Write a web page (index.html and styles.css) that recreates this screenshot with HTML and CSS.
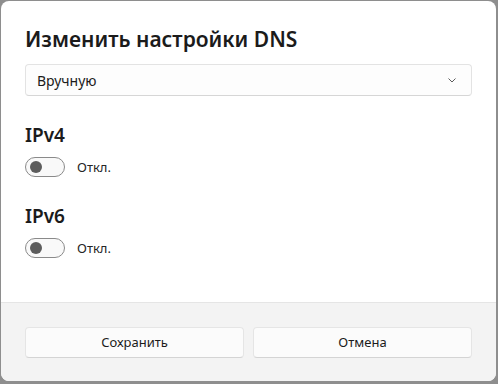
FILE: index.html
```html
<!DOCTYPE html>
<html lang="ru">
<head>
<meta charset="UTF-8">
<title>Изменить настройки DNS</title>
<link rel="stylesheet" href="styles.css">
</head>
<body>
<div class="dialog">
    <div class="content">
        <div class="title">Изменить настройки DNS</div>
        <div class="select">
            <span>Вручную</span>
            <svg width="12" height="12" viewBox="0 0 12 12"><path d="M2.5 4.5 L6 8 L9.5 4.5" fill="none" stroke="#5c5c5c" stroke-width="1"/></svg>
        </div>
        <div class="section">
            <div class="heading">IPv4</div>
            <div class="toggle-row">
                <div class="toggle"><div class="knob"></div></div>
                <span>Откл.</span>
            </div>
        </div>
        <div class="section">
            <div class="heading">IPv6</div>
            <div class="toggle-row">
                <div class="toggle"><div class="knob"></div></div>
                <span>Откл.</span>
            </div>
        </div>
    </div>
    <div class="footer">
        <button class="btn">Сохранить</button>
        <button class="btn">Отмена</button>
    </div>
</div>
</body>
</html>
```

FILE: styles.css
```css
html, body {
    margin: 0;
    padding: 0;
    height: 100%;
}
body {
    background: #8e8e8e;
    font-family: "Noto Sans", "Open Sans", sans-serif;
    color: #1b1b1b;
    padding: 1px 2px 3px 1px;
    box-sizing: border-box;
}
.dialog {
    height: 100%;
    background: #fff;
    border-radius: 8px;
    display: flex;
    flex-direction: column;
    overflow: hidden;
}
.content {
    flex: 1;
    padding: 24px 24px 0 24px;
}
.title {
    font-size: 21px;
    font-weight: 600;
    line-height: 28px;
}
.select {
    margin-top: 11px;
    height: 30px;
    border: 1px solid #e3e3e3;
    border-bottom-color: #d6d6d6;
    border-radius: 4px;
    background: #fdfdfd;
    display: flex;
    align-items: center;
    justify-content: space-between;
    padding: 0 13px 0 11px;
    font-size: 14px;
}
.section {
    margin-top: 26px;
}
.heading {
    font-size: 19px;
    font-weight: 600;
    line-height: 26px;
}
.toggle-row {
    display: flex;
    align-items: center;
    gap: 12px;
    margin-top: 9px;
    font-size: 13px;
    color: #262626;
}
.toggle {
    width: 34px;
    height: 18px;
    border: 1px solid #8a8a8a;
    border-radius: 10px;
    background: #f9f9f9;
    display: flex;
    align-items: center;
    padding-left: 4px;
    box-sizing: content-box;
}
.knob {
    width: 12px;
    height: 12px;
    border-radius: 50%;
    background: #5d5d5d;
}
.footer {
    height: 79px;
    background: #f3f3f3;
    border-top: 1px solid #e5e5e5;
    display: flex;
    align-items: center;
    gap: 9px;
    padding: 0 24px;
    box-sizing: border-box;
}
.btn {
    flex: 1;
    height: 31px;
    border: 1px solid #e5e5e5;
    border-bottom-color: #d4d4d4;
    border-radius: 4px;
    background: #fbfbfb;
    font-family: inherit;
    font-size: 13px;
    color: #1b1b1b;
}
```
